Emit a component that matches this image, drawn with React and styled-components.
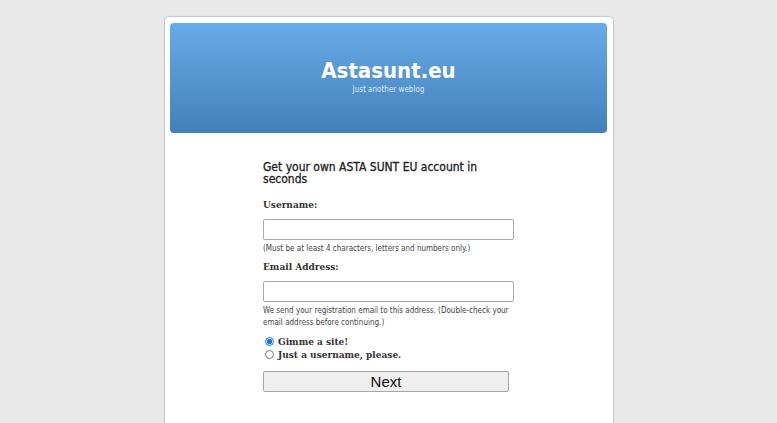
import { styled, createGlobalStyle } from "styled-components";

const Global = createGlobalStyle`
    html, body {
        margin: 0;
        padding: 0;
        background: #e9e9e9;
        height: 100%;
        overflow: hidden;
    }
`;

const Pagina = styled.div`
    display: flex;
    justify-content: center;
    padding-top: 16px;
    padding-left: 1px;
`;

const Cartao = styled.div`
    width: 437px;
    padding: 6px 6px 40px 5px;
    background: #fff;
    border: 1px solid #c9c9c9;
    border-radius: 5px;
    box-shadow: 0 0 2px rgba(0, 0, 0, 0.08);
    min-height: 420px;
`;

const Cabecalho = styled.div`
    height: 110px;
    border-radius: 4px;
    background: linear-gradient(to bottom, #67abe7, #4380ba);
    display: flex;
    flex-direction: column;
    align-items: center;
    justify-content: center;
    color: #fff;
    font-family: "DejaVu Sans Condensed", "DejaVu Sans", sans-serif;
    padding-bottom: 4px;
    box-sizing: border-box;
`;

const NomeSite = styled.h1`
    margin: 0;
    font-size: 22px;
    font-weight: bold;
    line-height: 25px;
`;

const Descricao = styled.div`
    font-size: 8px;
    color: #dbe9f7;
    margin-top: 2px;
`;

const Formulario = styled.form`
    width: 250px;
    margin: 28px 0 0 93px;
    font-family: "DejaVu Sans Condensed", "DejaVu Sans", sans-serif;
    color: #333;
`;

const Titulo = styled.h2`
    margin: 0;
    font-size: 12px;
    font-weight: normal;
    line-height: 12px;
    color: #222;
    -webkit-text-stroke: 0.3px #222;
`;

const Rotulo = styled.label`
    display: block;
    font-family: "DejaVu Serif Condensed", "DejaVu Serif", serif;
    font-weight: bold;
    font-size: 10px;
    line-height: 12px;
    color: #333;
    margin-top: ${props => props.$topo}px;
`;

const Campo = styled.input`
    display: block;
    box-sizing: border-box;
    width: 251px;
    height: 21px;
    margin-top: 8px;
    border: 1px solid #a9a9a9;
    border-radius: 2px;
    background: #fff;
`;

const Dica = styled.p`
    margin: 3px 0 0;
    font-size: 8px;
    line-height: 12px;
    color: #444;
`;

const Opcoes = styled.div`
    margin-top: 6px;
    display: flex;
    flex-direction: column;
`;

const Opcao = styled.label`
    display: flex;
    align-items: center;
    gap: 4px;
    font-family: "DejaVu Serif Condensed", "DejaVu Serif", serif;
    font-weight: bold;
    font-size: 10px;
    line-height: 13px;
    color: #333;

    input {
        margin: 0 0 0 2px;
        width: 9px;
        height: 9px;
        accent-color: #1a73e8;
    }
`;

const Botao = styled.button`
    display: block;
    width: 246px;
    height: 21px;
    margin-top: 10px;
    border: 1px solid #a6a6a6;
    border-radius: 2px;
    background: #efefef;
    font-family: "Liberation Sans", Arial, sans-serif;
    font-size: 15px;
    line-height: 17px;
    color: #111;
    padding: 0;
`;

const App = () => {

    return (
        <Pagina>
            <Global />
            <Cartao>
                <Cabecalho>
                    <NomeSite>Astasunt.eu</NomeSite>
                    <Descricao>Just another weblog</Descricao>
                </Cabecalho>
                <Formulario onSubmit={e => e.preventDefault()}>
                    <Titulo>Get your own ASTA SUNT EU account in seconds</Titulo>
                    <Rotulo $topo={14} htmlFor="user_name">Username:</Rotulo>
                    <Campo id="user_name" type="text" />
                    <Dica>(Must be at least 4 characters, letters and numbers only.)</Dica>
                    <Rotulo $topo={6} htmlFor="user_email">Email Address:</Rotulo>
                    <Campo id="user_email" type="text" />
                    <Dica>We send your registration email to this address. (Double-check your email address before continuing.)</Dica>
                    <Opcoes>
                        <Opcao>
                            <input type="radio" name="signup_for" defaultChecked />
                            Gimme a site!
                        </Opcao>
                        <Opcao>
                            <input type="radio" name="signup_for" />
                            Just a username, please.
                        </Opcao>
                    </Opcoes>
                    <Botao type="submit">Next</Botao>
                </Formulario>
            </Cartao>
        </Pagina>
    );
};

export default App;
